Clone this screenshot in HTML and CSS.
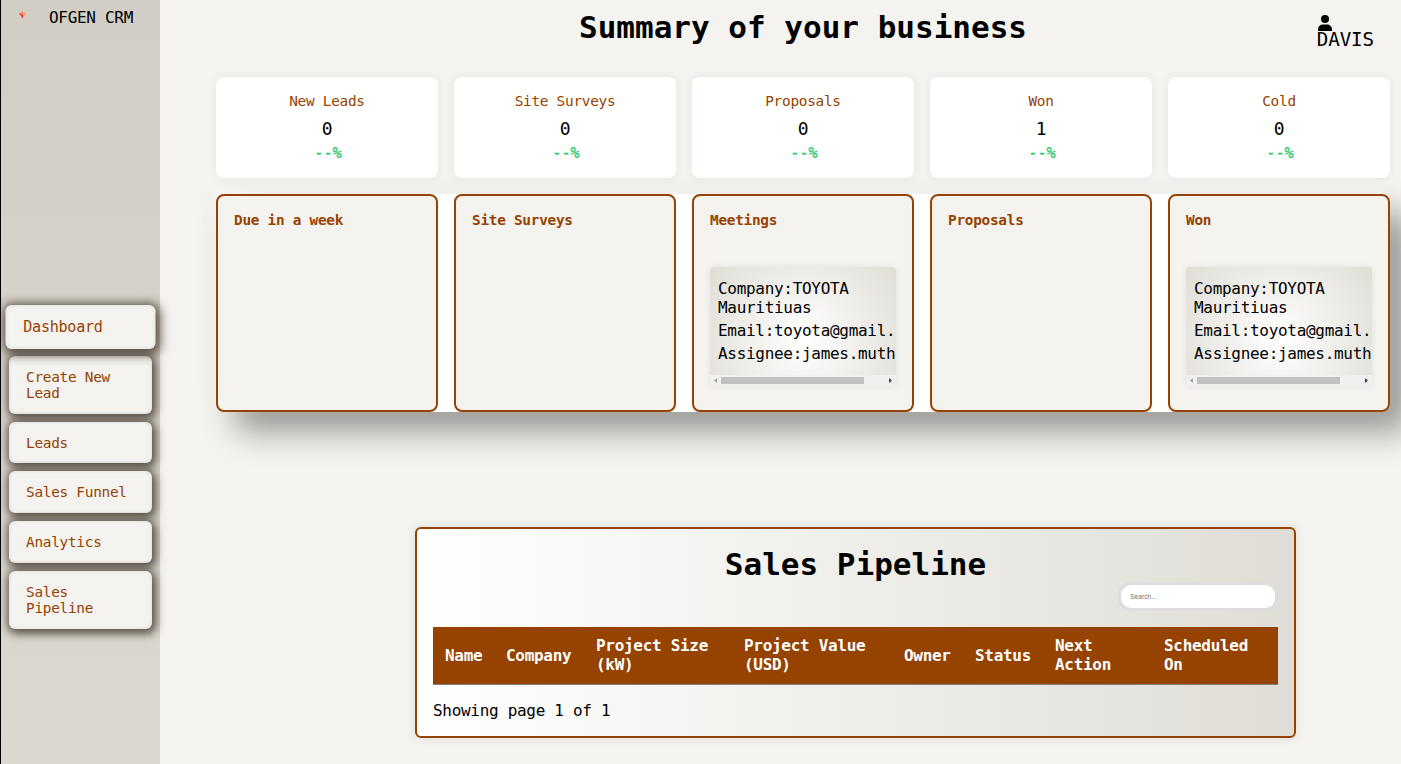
FILE: index.html
```html
<!DOCTYPE html>
<html lang="en">
<head>
<meta charset="utf-8">
<title>OFGEN CRM</title>
<link rel="stylesheet" href="styles.css">
</head>
<body>
<aside class="sidebar">
  <div class="brand">
    <svg class="logo" viewBox="0 0 8 8"><path d="M3 0l1.600 1.200L3.800 3z" fill="#ee6a3c"/><path d="M0 3l2-1.500 2 2L2 5z" fill="#f0544c"/><path d="M2 4.200L4 3.200 4.600 6 3 7.500z" fill="#e8403c"/><path d="M4 3.400l2-2L7.500 3.400 5.400 5z" fill="#f5a34a"/><path d="M4.600 1l1.600-.6-.6 1.800z" fill="#f4b860"/></svg>
    <span>OFGEN CRM</span>
  </div>
  <nav class="nav">
    <a class="nav-item active">Dashboard</a>
    <a class="nav-item">Create New Lead</a>
    <a class="nav-item short">Leads</a>
    <a class="nav-item">Sales Funnel</a>
    <a class="nav-item">Analytics</a>
    <a class="nav-item">Sales Pipeline</a>
  </nav>
</aside>
<main class="main">
  <header class="header">
    <h1 class="title">Summary of your business</h1>
    <div class="user">
      <svg class="user-icon" viewBox="0 0 14 16"><circle cx="7" cy="4" r="4" fill="#000"/><path d="M0 16v-1.500C0 11.500 2.300 9.500 5 9.500h4c2.700 0 5 2 5 5V16z" fill="#000"/></svg>
      <span>DAVIS</span>
    </div>
  </header>
  <section class="stats">
    <div class="stat"><span class="stat-name">New Leads</span><span class="stat-value">0</span><span class="stat-rate">--%</span></div>
    <div class="stat"><span class="stat-name">Site Surveys</span><span class="stat-value">0</span><span class="stat-rate">--%</span></div>
    <div class="stat"><span class="stat-name">Proposals</span><span class="stat-value">0</span><span class="stat-rate">--%</span></div>
    <div class="stat"><span class="stat-name">Won</span><span class="stat-value">1</span><span class="stat-rate">--%</span></div>
    <div class="stat"><span class="stat-name">Cold</span><span class="stat-value">0</span><span class="stat-rate">--%</span></div>
  </section>
  <section class="board">
    <div class="column"><h3 class="column-title">Due in a week</h3></div>
    <div class="column"><h3 class="column-title">Site Surveys</h3></div>
    <div class="column"><h3 class="column-title">Meetings</h3>
      <div class="lead">
        <div class="lead-body"><p>Company:TOYOTA Mauritiuas</p><p>Email:toyota@gmail.</p><p>Assignee:james.muth</p></div>
        <div class="scroll"><svg class="arrow" viewBox="0 0 11 11"><path d="M7 3v5L4 5.500z" fill="#a3a3a3"/></svg><i class="thumb"></i><svg class="arrow" viewBox="0 0 11 11"><path d="M4 3v5l3-2.500z" fill="#404040"/></svg></div>
      </div>
    </div>
    <div class="column"><h3 class="column-title">Proposals</h3></div>
    <div class="column"><h3 class="column-title">Won</h3>
      <div class="lead">
        <div class="lead-body"><p>Company:TOYOTA Mauritiuas</p><p>Email:toyota@gmail.</p><p>Assignee:james.muth</p></div>
        <div class="scroll"><svg class="arrow" viewBox="0 0 11 11"><path d="M7 3v5L4 5.500z" fill="#a3a3a3"/></svg><i class="thumb"></i><svg class="arrow" viewBox="0 0 11 11"><path d="M4 3v5l3-2.500z" fill="#404040"/></svg></div>
      </div>
    </div>
  </section>
  <section class="pipeline">
    <h2 class="pipeline-title">Sales Pipeline</h2>
    <input class="search" type="text" placeholder="Search...">
    <table class="table">
      <colgroup><col class="c1"><col class="c2"><col class="c3"><col class="c4"><col class="c5"><col class="c6"><col class="c7"><col class="c8"></colgroup>
      <thead><tr><th>Name</th><th>Company</th><th>Project Size (kW)</th><th>Project Value (USD)</th><th>Owner</th><th>Status</th><th>Next Action</th><th>Scheduled On</th></tr></thead>
    </table>
    <p class="pages">Showing page 1 of 1</p>
  </section>
</main>
</body>
</html>
```
FILE: styles.css
```css
* { box-sizing: border-box; }
body {
  margin: 0;
  display: flex;
  height: 764px;
  overflow: hidden;
  background: #f4f3ef;
  color: #000;
  font-family: "DejaVu Sans Mono", monospace;
  font-size: 16px;
  letter-spacing: -0.3px;
  line-height: 19px;
}
h1, h2, h3, p { margin: 0; }

.sidebar {
  flex: none;
  width: 160px;
  border-left: 1px solid #000;
  background: linear-gradient(#d2cdc5, #dbd8cf);
}
.brand {
  display: flex;
  height: 305px;
  padding: 8px 0 0 18px;
}
.logo { width: 8px; height: 8px; margin: 3px 22px 0 0; }
.nav {
  display: flex;
  flex-direction: column;
  gap: 8px;
  padding: 1px 8px 0;
}
.nav-item {
  padding: 13px 17px;
  border-radius: 6px;
  background: #f4f3ef;
  color: #964200;
  font-size: 14.4px;
  letter-spacing: -0.27px;
  line-height: 16px;
  box-shadow: 2px 3px 10px 2px rgba(40, 30, 20, .6), 0 0 9px 2px rgba(40, 30, 20, .35), inset 0 0 4px rgba(0, 0, 0, .1);
}
.nav-item.short { padding: 13px 17px 12px; }
.nav-item.active { transform: scale(1.05); }

.main { flex: 1; padding: 0 11px 0 56px; min-width: 0; }
.header {
  display: grid;
  grid-template-columns: 1fr auto 1fr;
  height: 77px;
}
.title {
  grid-column: 2;
  padding-top: 8px;
  font-size: 31px;
  line-height: 38px;
  letter-spacing: 0;
}
.user {
  display: flex;
  flex-direction: column;
  justify-self: end;
  padding: 15px 16px 0 0;
  font-size: 19.2px;
  line-height: 18px;
  letter-spacing: -0.1px;
}
.user-icon { width: 14px; height: 16px; margin-left: 1px; }

.stats, .board {
  display: grid;
  grid-template-columns: repeat(5, 222px);
  gap: 16px;
}
.stat {
  display: flex;
  flex-direction: column;
  align-items: center;
  height: 101px;
  padding-top: 15px;
  border-radius: 8px;
  background: #fff;
  box-shadow: 0 0 10px rgba(0, 0, 0, .06);
}
.stat-name { color: #964200; font-size: 14.4px; letter-spacing: -0.27px; line-height: 18px; }
.stat-value { font-size: 18px; line-height: 22px; margin-top: 8px; }
.stat-rate { color: #2ecc71; font-size: 15.2px; letter-spacing: 0; line-height: 18px; margin-top: 4px; padding-left: 2px; -webkit-text-stroke: 0.3px #2ecc71; }

.board {
  height: 218px;
  margin-top: 16px;
  background: #fff;
  border-radius: 8px;
  box-shadow: -4px -4px 10px rgba(255, 255, 255, .5), 20px 20px 32px rgba(0, 0, 0, .37), 0 0 30px rgba(0, 0, 0, .04);
}
.column {
  padding: 16px;
  border: 2px solid #964200;
  border-radius: 8px;
  background: #f4f3ef;
}
.column-title { color: #964200; font-size: 14.4px; letter-spacing: -0.27px; line-height: 17px; }
.lead {
  height: 119px;
  margin-top: 38px;
  width: 186px;
  border-radius: 4px;
  overflow: hidden;
  background: radial-gradient(circle at 50% 60%, #fff, #dfddd5);
  box-shadow: 0 0 6px rgba(0, 0, 0, .08);
}
.lead-body {
  display: flex;
  flex-direction: column;
  gap: 4px;
  height: 108px;
  padding: 12px 0 0 8px;
}
.scroll { display: flex; align-items: center; height: 11px; background: #f0f0f0; }
.arrow { flex: none; width: 11px; height: 11px; }
.thumb { flex: none; width: 143px; height: 7px; margin-right: 21px; background: #c1c1c1; }

.pipeline {
  width: 881px;
  height: 211px;
  margin: 115px 0 0 199px;
  padding: 16px;
  border: 2px solid #964200;
  border-radius: 6px;
  background: linear-gradient(to right, #fff, #dfddd5);
  box-shadow: 0 0 10px rgba(0, 0, 0, .1);
}
.pipeline-title { text-align: center; font-size: 31px; line-height: 38px; letter-spacing: 0; }
.search {
  display: block;
  width: 154px;
  height: 23px;
  margin: 2px 3px 0 auto;
  padding: 0 9px;
  border: 0;
  border-radius: 10px;
  background: #fff;
  box-shadow: 0 0 0 3px #ddd;
  font: 6.7px "Liberation Sans", sans-serif;
  color: #757575;
}
.table {
  width: 845px;
  margin-top: 19px;
  border-collapse: separate;
  border-spacing: 0;
  table-layout: fixed;
}
.c1 { width: 61px; }
.c2 { width: 90px; }
.c3 { width: 148px; }
.c4 { width: 160px; }
.c5 { width: 71px; }
.c6 { width: 80px; }
.c7 { width: 109px; }
.c8 { width: 126px; }
th {
  height: 58px;
  padding: 0 12px 1px;
  text-align: left;
  color: #fff;
  background: #964200;
  border-bottom: 1px solid #808080;
}
.pages { margin-top: 16px; }
```
